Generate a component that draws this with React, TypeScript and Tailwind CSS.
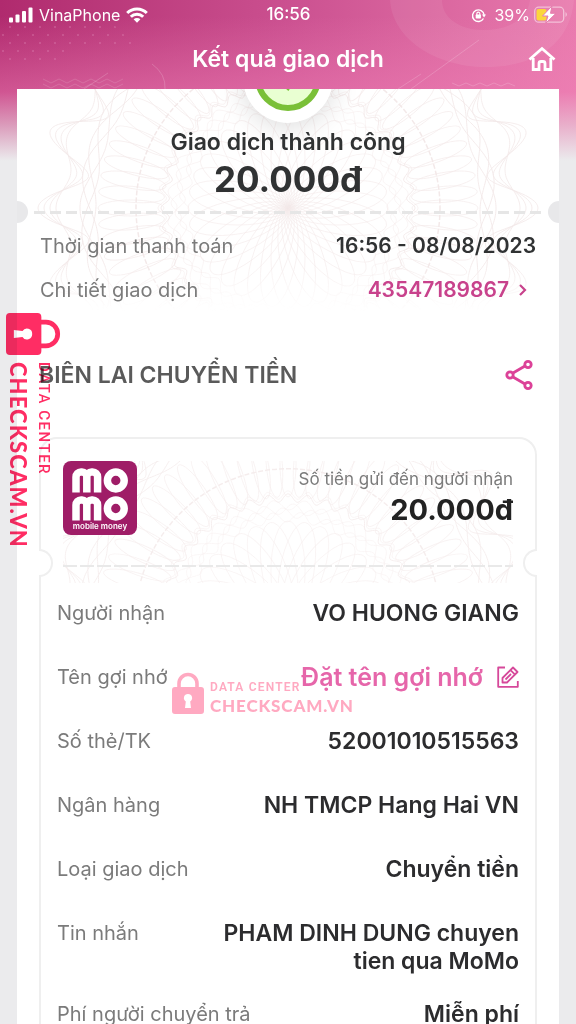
import type { ReactNode } from "react";

type IconProps = { className?: string };

const rows: { label: string; value: string }[] = [
  { label: "Số thẻ/TK", value: "52001010515563" },
  { label: "Ngân hàng", value: "NH TMCP Hang Hai VN" },
  { label: "Loại giao dịch", value: "Chuyển tiền" },
  { label: "Tin nhắn", value: "PHAM DINH DUNG chuyen tien qua MoMo" },
  { label: "Phí người chuyển trả", value: "Miễn phí" },
];

// closed wavy ring around the origin
const wave = (radius: number, amp: number, count: number, phase = 0) => {
  const points: string[] = [];
  for (let i = 0; i <= 720; i++) {
    const a = (i * Math.PI) / 360;
    const r = radius + amp * Math.cos(count * a + phase);
    points.push(`${(r * Math.cos(a)).toFixed(1)} ${(r * Math.sin(a)).toFixed(1)}`);
  }
  return `M${points.join("L")}Z`;
};

const petals = (count: number) => Array.from({ length: count }, (_, i) => (i * 360) / count);

const Guilloche = ({ className, viewBox }: { className?: string; viewBox: string }) => (
  <svg className={className} viewBox={viewBox} preserveAspectRatio="xMidYMid slice" fill="none" stroke="#f3e9e9" strokeWidth="0.9" aria-hidden="true">
    {petals(36).map((deg) => (
      <ellipse key={deg} cx="50" rx="50" ry="17" transform={`rotate(${deg})`} strokeOpacity="0.6" />
    ))}
    {petals(72).map((deg) => (
      <ellipse key={deg} cx="157" rx="33" ry="8" transform={`rotate(${deg})`} strokeOpacity="0.7" />
    ))}
    {[104, 108, 112, 116].map((r) => (
      <path key={r} d={wave(r, 5, 24, r)} strokeOpacity="0.5" />
    ))}
    <path d={wave(123, 4, 40)} />
    <path d={wave(126, 4, 40)} strokeOpacity="0.6" />
    <circle r="152" strokeWidth="1.500" strokeDasharray="5 2" />
    {[0, 1.5, 3, 4.5].map((phase) => (
      <path key={phase} d={wave(200, 8, 10, phase)} />
    ))}
    {[6, 12, 18, 24].map((amp) => (
      <path key={amp} d={wave(226, amp, 20, 0)} strokeOpacity="0.9" />
    ))}
  </svg>
);

const HeaderArt = () => (
  <svg className="absolute inset-0 h-full w-full" viewBox="0 0 576 164" preserveAspectRatio="xMidYMin slice" fill="none" stroke="#fff" aria-hidden="true">
    <defs>
      <pattern id="dots" width="15" height="16" patternUnits="userSpaceOnUse">
        <circle cx="3" cy="3" r="1" fill="#e79ac4" stroke="none" />
        <circle cx="10" cy="11" r="1" fill="#e79ac4" stroke="none" />
      </pattern>
    </defs>
    <path d="M0 23H112L136 46L75 50L54 64H0Z" fill="url(#dots)" stroke="none" opacity="0.35" />
    <path d="M390 0C392 38 435 67 485 67C535 67 570 45 574 0H530C528 18 510 30 483 30C460 30 442 18 442 0Z" fill="#fff" stroke="none" opacity="0.07" />
    <path d="M43 79l8 4 8-4 8 4 8-4 8 4 8-4 8 4 8-4 8 4 8-4M43 84l8 4 8-4 8 4 8-4 8 4 8-4 8 4 8-4 8 4 8-4" opacity="0.14" />
    <path d="M84 89L108 73M152 64Q166 74 165 89M398 89L421 74M411 89L479 40M452 83l7 3 7-3 7 3 7-3 7 3 7-3 7 3 7-3 7 3" opacity="0.18" />
  </svg>
);

const Signal = () => (
  <svg className="h-4 w-6" viewBox="0 0 24 16" fill="#fff" aria-hidden="true">
    <rect x="0" y="10.500" width="4" height="5" rx="1" />
    <rect x="6.500" y="7.500" width="4" height="8" rx="1" />
    <rect x="13" y="4" width="4" height="11.500" rx="1" />
    <rect x="19.500" y="0.500" width="4" height="15" rx="1" />
  </svg>
);

const Wifi = () => (
  <svg className="h-4 w-[22px]" viewBox="0 0 22 16" fill="none" stroke="#fff" strokeWidth="3" aria-hidden="true">
    <path d="M1.200 6C6.500 0.600 15.500 0.600 20.800 6" />
    <path d="M4.800 9.800C8.300 6.300 13.700 6.300 17.200 9.800" />
    <path d="M11 15.800L7.600 12.300C9.500 10.600 12.500 10.600 14.400 12.300Z" fill="#fff" stroke="none" />
  </svg>
);

const RotationLock = () => (
  <svg className="h-[15px] w-[15px]" viewBox="0 0 16 16" fill="none" stroke="#fff" strokeWidth="1.500" aria-hidden="true">
    <path d="M13.300 11.200A6.200 6.200 0 1 1 14 7.500" />
    <path d="M11.700 7H16L13.900 10Z" fill="#fff" stroke="none" />
    <rect x="5" y="7" width="5.600" height="4.300" rx="0.800" fill="#fff" stroke="none" />
    <path d="M6.200 7.500V6a1.600 1.600 0 0 1 3.200 0v1.500" strokeWidth="1.200" />
  </svg>
);

const Battery = () => (
  <svg className="h-[18px] w-[34px]" viewBox="0 0 34 18" aria-hidden="true">
    <rect x="0.700" y="1.200" width="29" height="15" rx="4" fill="none" stroke="#fff" strokeOpacity="0.5" strokeWidth="1.300" />
    <rect x="2.500" y="3" width="10" height="11.500" rx="2" fill="#fbd63c" />
    <path d="M31.500 6a3 3 0 0 1 0 5Z" fill="#fff" fillOpacity="0.5" />
    <path d="M18 0L8.500 10H14L11.500 17.500L22 7.300H16.500Z" fill="#fff" stroke="#e67cad" strokeWidth="1" />
  </svg>
);

const Home = () => (
  <svg className="h-[26px] w-7" viewBox="0 0 28 26" fill="none" stroke="#fff" strokeWidth="2.800" aria-hidden="true">
    <path d="M1.500 13.500L14 2.500L26.500 13.500" />
    <path d="M5.200 12V23.500H11V17.500a2 2 0 0 1 2-2h2a2 2 0 0 1 2 2v6h5.800V12" />
  </svg>
);

const Share = () => (
  <svg className="h-8 w-7" viewBox="0 0 28 32" fill="none" stroke="#dc4298" strokeWidth="2.800" aria-hidden="true">
    <path d="M8 14L20 7M8 18L20 25" />
    <circle cx="5" cy="16" r="3.200" />
    <circle cx="23" cy="5.500" r="3.200" />
    <circle cx="23" cy="26.500" r="3.200" />
  </svg>
);

const Edit = () => (
  <svg className="h-[22px] w-[22px]" viewBox="0 0 22 22" fill="none" stroke="#d6489a" strokeWidth="1.800" strokeLinejoin="round" aria-hidden="true">
    <path d="M8 1.500H1.200V20.800H20.800V15" />
    <path d="M5.500 16.500V12L16 1.500L20.500 6L10 16.500ZM13.500 4.200L17.800 8.400M8.500 13.500L14 8" />
  </svg>
);

const Chevron = () => (
  <svg className="h-3 w-2" viewBox="0 0 8 12" fill="none" stroke="#c8428c" strokeWidth="2.200" aria-hidden="true">
    <path d="M1 1L6 6L1 11" />
  </svg>
);

const PadlockShape = () => (
  <>
    <path d="M7 17V11.500a9 9 0 0 1 18 0V17" fill="none" stroke="currentColor" strokeWidth="3.600" />
    <path fillRule="evenodd" fill="currentColor" d="M3 15H29a3 3 0 0 1 3 3V39a3 3 0 0 1-3 3H3a3 3 0 0 1-3-3V18a3 3 0 0 1 3-3ZM16 22a4 4 0 0 0-2.200 7.400L13 36h6l-.800-6.600A4 4 0 0 0 16 22Z" />
  </>
);

const Padlock = ({ className }: IconProps) => (
  <svg className={className} viewBox="0 0 32 42" aria-hidden="true">
    <PadlockShape />
  </svg>
);

const PadlockSideways = ({ className }: IconProps) => (
  <svg className={className} viewBox="-42 0 42 32" aria-hidden="true">
    <g transform="rotate(90)">
      <PadlockShape />
    </g>
  </svg>
);

const MoMoLogo = () => (
  <div className="flex h-[74px] w-[74px] flex-col items-center rounded-lg bg-[#9f1d67] pt-[7px]">
    <svg className="h-[53px] w-14" viewBox="0 0 56 53" fill="none" stroke="#fff" strokeWidth="7.500" aria-hidden="true">
      {[0, 28].map((y) => (
        <g key={y} transform={`translate(0 ${y})`}>
          <path d="M4 24.500V9a5 5 0 0 1 5-5h1a4.800 4.800 0 0 1 4.800 4.800V24.500M14.800 24.500V8.800a4.800 4.800 0 0 1 4.800-4.800h1a5 5 0 0 1 5 5V24.500" />
          <circle cx="43.800" cy="12.500" r="8.400" />
        </g>
      ))}
    </svg>
    <span className="text-[8px] leading-[10px] font-semibold whitespace-nowrap text-white">mobile money</span>
  </div>
);

const SuccessBadge = () => (
  <div className="absolute -top-14 left-1/2 h-[90px] w-[90px] -translate-x-1/2 rounded-full bg-white p-3 shadow-[0_4px_28px_rgba(0,0,0,0.14)]">
    <svg className="h-full w-full" viewBox="0 0 66 66" fill="none" aria-hidden="true">
      <circle cx="33" cy="33" r="30" fill="#e9ffd2" stroke="#7ac038" strokeWidth="6" />
      <path d="M20 31L33 43L47 22" stroke="#7ac038" strokeWidth="4" />
    </svg>
  </div>
);

const DetailRow = ({ label, children }: { label: string; children: ReactNode }) => (
  <div className="flex min-h-16 items-start justify-between gap-4 pb-[25px]">
    <dt className="shrink-0 text-xl leading-7 text-[#7b7b7b]">{label}</dt>
    <dd className="max-w-[320px] text-right text-[23px] leading-7 font-semibold text-[#2c2c2e]">{children}</dd>
  </div>
);

const App: React.FC = () => {
  return (
    <div className="relative flex h-screen flex-col overflow-hidden bg-[#ebebed] font-['Inter','Liberation_Sans',sans-serif]">
      <div className="absolute inset-x-0 top-0 h-[164px] bg-linear-to-r from-[#b02a6e] via-[#cb5090] to-[#e97bae]">
        <div className="absolute inset-0 bg-[linear-gradient(to_bottom,transparent_10%,rgba(240,128,182,0.5)_56%,rgba(233,192,212,0.75)_76%,#ebebed_98%)]" />
        <HeaderArt />
      </div>

      <header className="relative h-[89px] shrink-0 text-white">
        <div className="grid h-[30px] grid-cols-[1fr_auto_1fr] items-center pr-2 pl-[9px] text-base">
          <div className="flex items-center gap-[6px]">
            <Signal />
            <span>VinaPhone</span>
            <Wifi />
          </div>
          <span className="text-[17px] font-medium">16:56</span>
          <div className="flex items-center justify-end gap-1">
            <RotationLock />
            <span className="ml-1">39%</span>
            <Battery />
          </div>
        </div>
        <div className="flex h-[58px] items-center justify-center">
          <h1 className="text-[23px] font-semibold">Kết quả giao dịch</h1>
          <button type="button" aria-label="Trang chủ" className="absolute right-5">
            <Home />
          </button>
        </div>
      </header>

      <main className="relative mx-[17px] flex-1 overflow-hidden bg-white">
        <section className="relative px-[23px] pt-[38px]">
          <Guilloche className="absolute inset-x-0 top-0 h-[222px] w-full [mask-image:linear-gradient(to_bottom,black_80%,transparent)]" viewBox="-271 -119 542 222" />
          <SuccessBadge />
          <div className="relative text-center text-[#303233]">
            <h2 className="text-[23px] leading-[30px] font-semibold">Giao dịch thành công</h2>
            <p className="mt-[2px] text-[35px] leading-[40px] font-bold">20.000đ</p>
          </div>
          <div className="relative -mx-[23px] mt-[2px] flex h-[22px] items-center justify-between">
            <span className="h-[22px] w-[11px] rounded-r-full bg-[#e8e8ea]" />
            <span className="mx-[6px] h-[3px] flex-1 bg-[repeating-linear-gradient(to_right,#e6e6e6_0_11px,transparent_11px_16px)]" />
            <span className="h-[22px] w-[11px] rounded-l-full bg-[#e8e8ea]" />
          </div>
          <dl className="relative mt-[9px] text-xl leading-7">
            <div className="flex justify-between">
              <dt className="text-[#7b7b7b]">Thời gian thanh toán</dt>
              <dd className="text-[21px] font-semibold text-[#303233]">16:56 - 08/08/2023</dd>
            </div>
            <div className="mt-4 flex justify-between">
              <dt className="text-[#7b7b7b]">Chi tiết giao dịch</dt>
              <dd>
                <a href="#chi-tiet" className="flex items-center gap-[10px] pr-[9px] text-[21px] font-semibold text-[#c8428c]">
                  43547189867
                  <Chevron />
                </a>
              </dd>
            </div>
          </dl>
        </section>

        <section className="mt-[55px] px-[22px]">
          <div className="flex items-center justify-between pr-1">
            <h2 className="text-[23px] leading-8 font-semibold text-[#5a5a5a]">BIÊN LAI CHUYỂN TIỀN</h2>
            <button type="button" aria-label="Chia sẻ">
              <Share />
            </button>
          </div>

          <div id="chi-tiet" className="relative mt-[46px] rounded-t-[18px] border-2 border-b-0 border-[#efefef] pt-[22px]">
            <div className="relative mx-[22px] h-[122px] overflow-hidden">
              <Guilloche className="absolute inset-0 h-full w-full opacity-80" viewBox="-224 -160 448 122" />
              <div className="relative flex items-start justify-between">
                <MoMoLogo />
                <div className="pt-[5px] text-right">
                  <p className="text-[17px] leading-[26px] text-[#7b7b7b]">Số tiền gửi đến người nhận</p>
                  <p className="text-[29px] leading-9 font-bold text-[#222]">20.000đ</p>
                </div>
              </div>
              <div className="relative mt-[30px] h-[2px] bg-[repeating-linear-gradient(to_right,#e9e9e9_0_14px,transparent_14px_17px)]" />
            </div>
            <span className="absolute top-[110px] -left-[2px] h-7 w-[14px] rounded-r-full border-2 border-l-0 border-[#efefef] bg-white" />
            <span className="absolute top-[110px] -right-[2px] h-7 w-[14px] rounded-l-full border-2 border-r-0 border-[#efefef] bg-white" />

            <dl className="mt-4 px-4">
              <DetailRow label="Người nhận">VO HUONG GIANG</DetailRow>
              <DetailRow label="Tên gợi nhớ">
                <button type="button" className="flex items-center gap-[14px] text-[25px] leading-7 text-[#e666aa]">
                  Đặt tên gợi nhớ
                  <Edit />
                </button>
              </DetailRow>
              {rows.map((row) => (
                <DetailRow key={row.label} label={row.label}>
                  {row.value}
                </DetailRow>
              ))}
            </dl>
          </div>
        </section>
      </main>

      {/* watermarks, laid over the receipt */}
      <div className="absolute top-[313px] left-[6px] text-[#ff2d64] mix-blend-multiply">
        <PadlockSideways className="h-[42px] w-[55px]" />
        <div className="mt-[7px] ml-[2px] whitespace-nowrap [writing-mode:vertical-rl]">
          <p className="font-[Roboto] text-[15px] leading-4 font-medium tracking-widest">DATA CENTER</p>
          <p className="mr-2 font-[Lato] text-[22px] leading-5 font-black tracking-wider">CHECKSCAM.VN</p>
        </div>
      </div>
      <div className="absolute top-[672px] left-[172px] flex items-end gap-[6px] whitespace-nowrap text-[#ffa9c1] mix-blend-multiply">
        <Padlock className="h-[42px] w-8" />
        <div>
          <p className="mb-[3px] font-[Roboto] text-xs leading-4 font-semibold tracking-widest">DATA CENTER</p>
          <p className="font-[Lato] text-[17px] leading-4 font-black tracking-wider">CHECKSCAM.VN</p>
        </div>
      </div>
    </div>
  );
};

export default App;
